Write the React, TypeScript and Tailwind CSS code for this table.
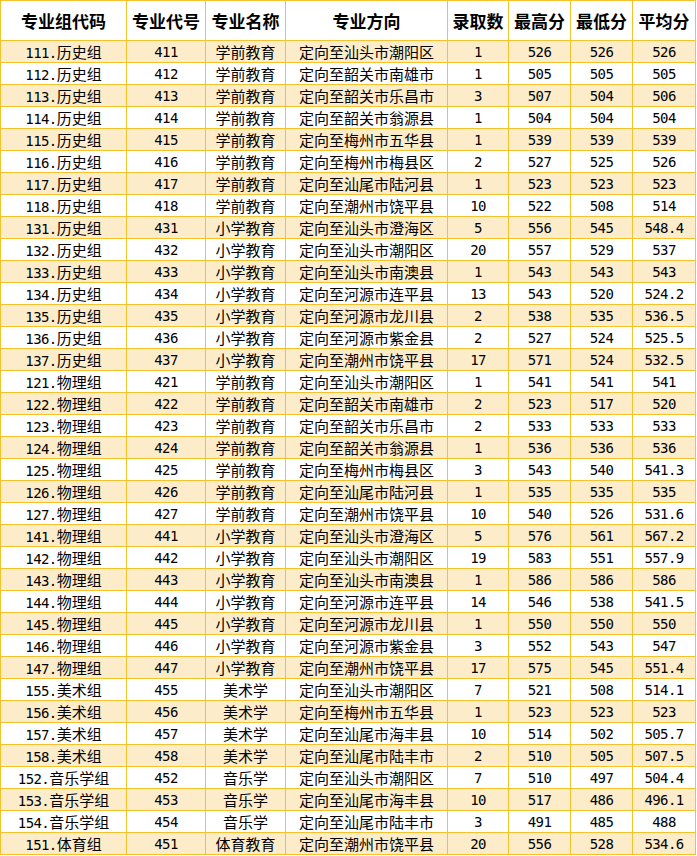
import React from "react";

type Row = [string, string, string, string, string, string, string, string];

const rows: Row[] = [
  ["111.历史组", "411", "学前教育", "定向至汕头市潮阳区", "1", "526", "526", "526"],
  ["112.历史组", "412", "学前教育", "定向至韶关市南雄市", "1", "505", "505", "505"],
  ["113.历史组", "413", "学前教育", "定向至韶关市乐昌市", "3", "507", "504", "506"],
  ["114.历史组", "414", "学前教育", "定向至韶关市翁源县", "1", "504", "504", "504"],
  ["115.历史组", "415", "学前教育", "定向至梅州市五华县", "1", "539", "539", "539"],
  ["116.历史组", "416", "学前教育", "定向至梅州市梅县区", "2", "527", "525", "526"],
  ["117.历史组", "417", "学前教育", "定向至汕尾市陆河县", "1", "523", "523", "523"],
  ["118.历史组", "418", "学前教育", "定向至潮州市饶平县", "10", "522", "508", "514"],
  ["131.历史组", "431", "小学教育", "定向至汕头市澄海区", "5", "556", "545", "548.4"],
  ["132.历史组", "432", "小学教育", "定向至汕头市潮阳区", "20", "557", "529", "537"],
  ["133.历史组", "433", "小学教育", "定向至汕头市南澳县", "1", "543", "543", "543"],
  ["134.历史组", "434", "小学教育", "定向至河源市连平县", "13", "543", "520", "524.2"],
  ["135.历史组", "435", "小学教育", "定向至河源市龙川县", "2", "538", "535", "536.5"],
  ["136.历史组", "436", "小学教育", "定向至河源市紫金县", "2", "527", "524", "525.5"],
  ["137.历史组", "437", "小学教育", "定向至潮州市饶平县", "17", "571", "524", "532.5"],
  ["121.物理组", "421", "学前教育", "定向至汕头市潮阳区", "1", "541", "541", "541"],
  ["122.物理组", "422", "学前教育", "定向至韶关市南雄市", "2", "523", "517", "520"],
  ["123.物理组", "423", "学前教育", "定向至韶关市乐昌市", "2", "533", "533", "533"],
  ["124.物理组", "424", "学前教育", "定向至韶关市翁源县", "1", "536", "536", "536"],
  ["125.物理组", "425", "学前教育", "定向至梅州市梅县区", "3", "543", "540", "541.3"],
  ["126.物理组", "426", "学前教育", "定向至汕尾市陆河县", "1", "535", "535", "535"],
  ["127.物理组", "427", "学前教育", "定向至潮州市饶平县", "10", "540", "526", "531.6"],
  ["141.物理组", "441", "小学教育", "定向至汕头市澄海区", "5", "576", "561", "567.2"],
  ["142.物理组", "442", "小学教育", "定向至汕头市潮阳区", "19", "583", "551", "557.9"],
  ["143.物理组", "443", "小学教育", "定向至汕头市南澳县", "1", "586", "586", "586"],
  ["144.物理组", "444", "小学教育", "定向至河源市连平县", "14", "546", "538", "541.5"],
  ["145.物理组", "445", "小学教育", "定向至河源市龙川县", "1", "550", "550", "550"],
  ["146.物理组", "446", "小学教育", "定向至河源市紫金县", "3", "552", "543", "547"],
  ["147.物理组", "447", "小学教育", "定向至潮州市饶平县", "17", "575", "545", "551.4"],
  ["155.美术组", "455", "美术学", "定向至汕头市潮阳区", "7", "521", "508", "514.1"],
  ["156.美术组", "456", "美术学", "定向至梅州市五华县", "1", "523", "523", "523"],
  ["157.美术组", "457", "美术学", "定向至汕尾市海丰县", "10", "514", "502", "505.7"],
  ["158.美术组", "458", "美术学", "定向至汕尾市陆丰市", "2", "510", "505", "507.5"],
  ["152.音乐学组", "452", "音乐学", "定向至汕头市潮阳区", "7", "510", "497", "504.4"],
  ["153.音乐学组", "453", "音乐学", "定向至汕尾市海丰县", "10", "517", "486", "496.1"],
  ["154.音乐学组", "454", "音乐学", "定向至汕尾市陆丰市", "3", "491", "485", "488"],
  ["151.体育组", "451", "体育教育", "定向至潮州市饶平县", "20", "556", "528", "534.6"],
];

const headers = ["专业组代码", "专业代号", "专业名称", "专业方向", "录取数", "最高分", "最低分", "平均分"];

function Txt({ s }: { s: string }) {
  const parts = s.split(/([\x00-\x7F]+)/).filter((p) => p.length > 0);
  return (
    <span className="inline-flex items-baseline">
      {parts.map((p, i) =>
        /^[\x00-\x7F]+$/.test(p) ? (
          <span key={i} className="font-['DejaVu_Sans_Mono',monospace] text-[14px] tracking-[-0.6px]">
            {p}
          </span>
        ) : (
          <span key={i} className="font-['Noto_Sans_CJK_SC',sans-serif] text-[15px]">
            {p}
          </span>
        )
      )}
    </span>
  );
}

const gridCols = "grid grid-cols-[126px_79px_80px_162px_61px_62px_62px_63px]";
const cell = "flex items-center justify-center border-r border-b border-[#f3c22c] whitespace-nowrap overflow-hidden";

export default function App() {
  return (
    <div className="w-[697px] min-h-[856px] bg-white">
      <div className="w-[696px] border-l border-t border-[#f3c22c] text-black">
        <div className={gridCols + " h-[40px] bg-white"}>
          {headers.map((h) => (
            <div key={h} className={cell + " font-['Noto_Sans_CJK_SC',sans-serif] text-[17px] font-bold leading-none"}>
              {h}
            </div>
          ))}
        </div>
        {rows.map((r, i) => (
          <div key={i} className={gridCols + " h-[22px] " + (i % 2 === 0 ? "bg-[#fdecca]" : "bg-white")}>
            {r.map((c, j) => (
              <div key={j} className={cell + " leading-none"}>
                <Txt s={c} />
              </div>
            ))}
          </div>
        ))}
      </div>
    </div>
  );
}
